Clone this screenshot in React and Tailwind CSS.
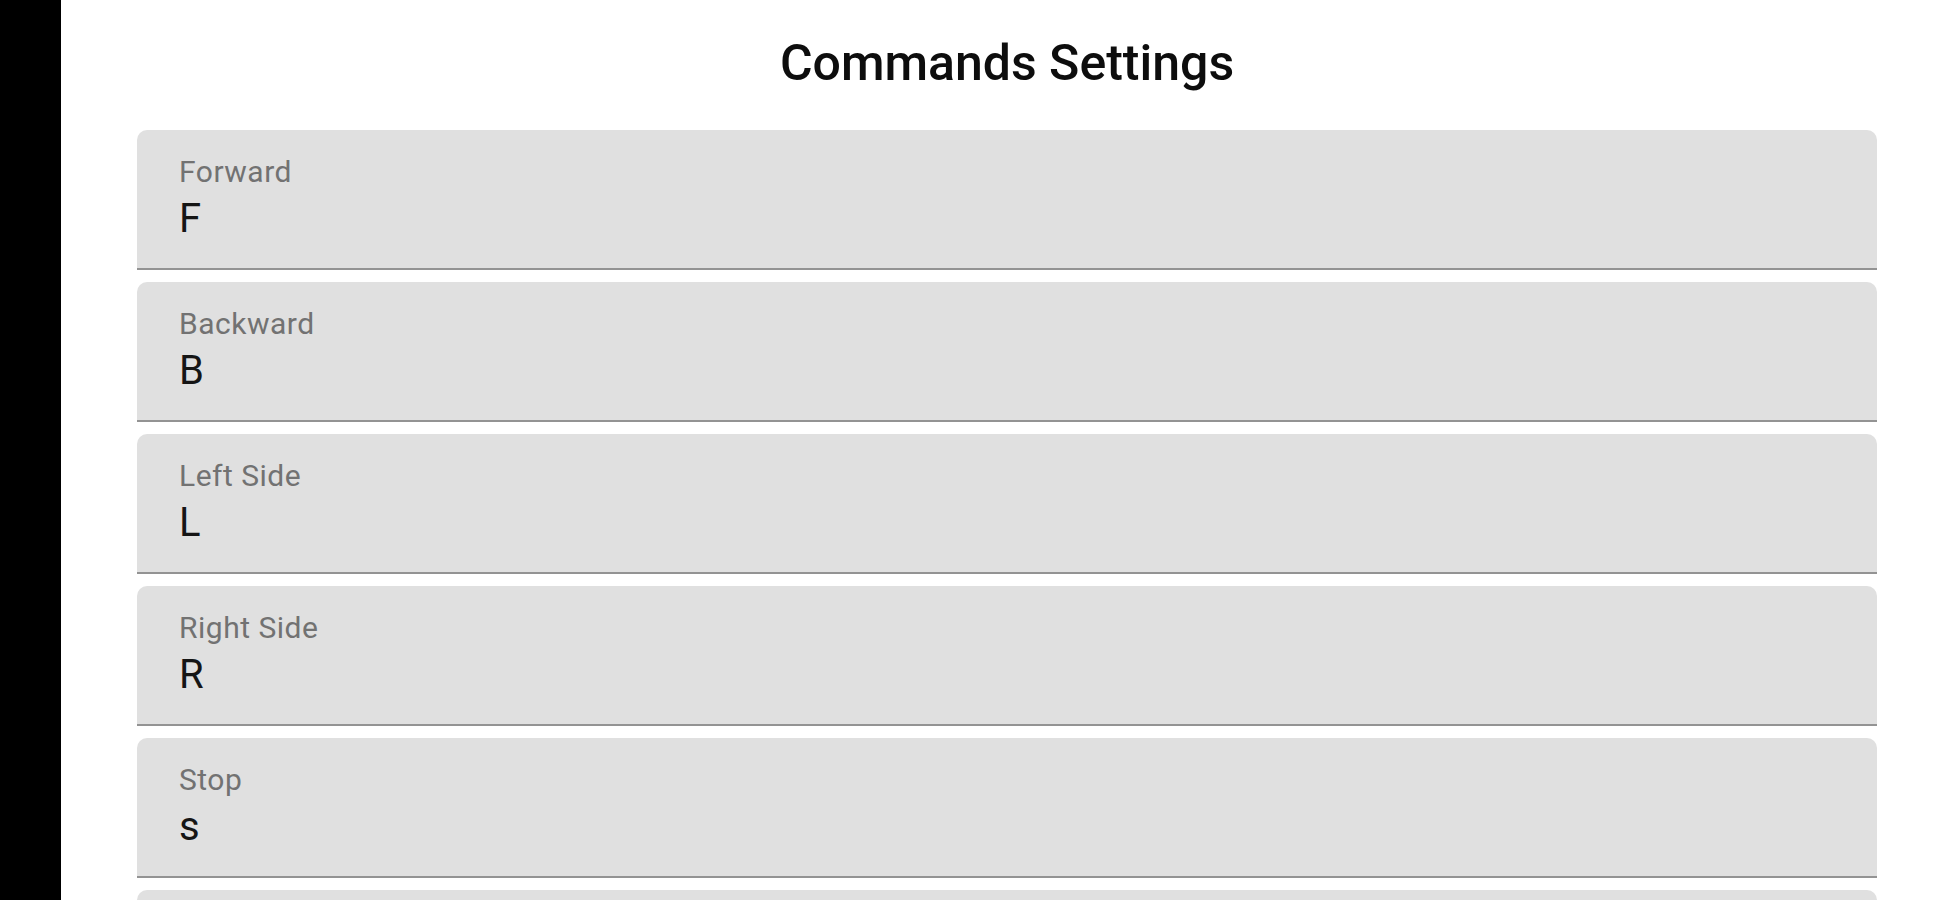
const COMMANDS = [
  { label: "Forward", value: "F" },
  { label: "Backward", value: "B" },
  { label: "Left Side", value: "L" },
  { label: "Right Side", value: "R" },
  { label: "Stop", value: "s" },
];

export default function App() {
  return (
    <div className="flex h-[900px] overflow-hidden bg-white" style={{ fontFamily: "Roboto, 'Noto Sans', sans-serif" }}>
      <div className="w-[61px] shrink-0 bg-black" />
      <div className="flex-1 px-[76px]">
        <h1 className="pt-[38px] text-center text-[50px] font-medium leading-none text-[#0d0d0d]">
          Commands Settings
        </h1>
        <div className="mt-[42px] flex flex-col gap-[12px]">
          {COMMANDS.map(c => (
            <div
              key={c.label}
              className="h-[140px] shrink-0 rounded-t-[10px] border-b-2 border-[#939393] bg-[#e0e0e0] pl-[42px] pt-[27px]"
            >
              <div className="text-[30px] leading-none tracking-[0.5px] text-[#727272]">{c.label}</div>
              <div className="mt-[12px] text-[40px] leading-none text-[#151515]">{c.value}</div>
            </div>
          ))}
          {/* next field, scrolled below the fold */}
          <div className="h-[140px] shrink-0 rounded-t-[10px] border-b-2 border-[#939393] bg-[#e0e0e0]" />
        </div>
      </div>
    </div>
  );
}
